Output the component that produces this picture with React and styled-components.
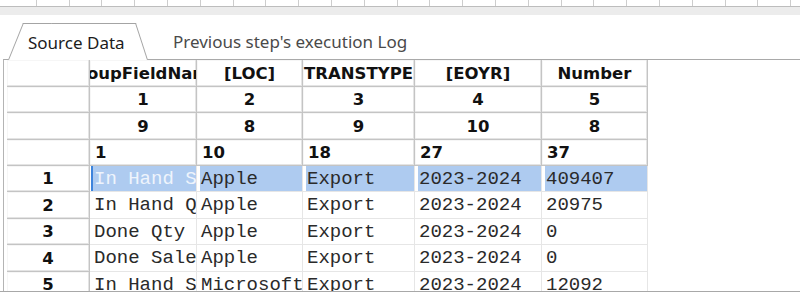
import React from "react";
import styled, { createGlobalStyle } from "styled-components";

const GlobalStyle = createGlobalStyle`
  html, body {
    margin: 0;
    padding: 0;
    background: #fff;
    overflow: hidden;
  }
  #root {
    width: 800px;
    height: 292px;
  }
`;

const Frame = styled.div`
  width: 800px;
  height: 291px;
  border-bottom: 1px solid #a8a8a8;
  overflow: hidden;
  display: flex;
  flex-direction: column;
  background: #fff;
`;

// bit of the grid that sits above, scrolled almost out of view
const StripRow = styled.div`
  display: flex;
  flex-shrink: 0;
  height: 6px;
  padding-left: 4px;
  border-bottom: 1px solid #bdbdbd;
`;

const StripCell = styled.div`
  flex: 0 0 32.8px;
  box-sizing: border-box;
  border-right: 1px solid #cdcdcd;
`;

const Band = styled.div`
  flex-shrink: 0;
  height: 8px;
  background: #ececec;
`;

const TabBar = styled.div`
  flex-shrink: 0;
  height: 44px;
  display: flex;
  align-items: flex-end;
  padding-left: 8px;
  font-family: "Noto Sans", "Open Sans", sans-serif;
  font-size: 17px;
`;

const ActiveTab = styled.div`
  position: relative;
  z-index: 1;
  width: 140px;
  height: 37px;
  margin-bottom: -1px;
  box-sizing: border-box;
  padding: 10px 0 0 20px;
  line-height: 20px;
  color: #1c1c1c;

  &::before,
  &::after {
    content: "";
    position: absolute;
    top: 0;
    bottom: 0;
    width: 60%;
    background: #fff;
    border-top: 1px solid #a4a4a4;
    z-index: -1;
  }

  &::before {
    left: 0;
    border-left: 1px solid #a4a4a4;
    transform: skewX(-22deg);
    transform-origin: bottom left;
  }

  &::after {
    right: 0;
    border-right: 1px solid #a4a4a4;
    transform: skewX(18deg);
    transform-origin: bottom right;
  }
`;

const IdleTab = styled.div`
  height: 37px;
  margin-left: 25px;
  box-sizing: border-box;
  padding-top: 10px;
  line-height: 20px;
  color: #4a4a4a;
`;

const Panel = styled.div`
  flex: 1;
  margin-left: 3px;
  padding-left: 3px;
  border-top: 1px solid #a9a9a9;
  border-left: 1px solid #b4b4b4;
`;

const Grid = styled.div`
  display: grid;
  grid-template-columns: 83px 107px 106px 112px 127px 106px;
  grid-template-rows: 27px 26px 27px 26px 26px 27px 26px 27px 26px;
  width: max-content;
`;

const FixedCell = styled.div`
  box-sizing: border-box;
  display: flex;
  align-items: center;
  justify-content: ${(p) => (p.$left ? "flex-start" : "center")};
  padding: 0 5px;
  overflow: hidden;
  white-space: nowrap;
  background: #fff;
  border-right: 1px solid #c4c4c4;
  border-bottom: 1px solid #c4c4c4;
  box-shadow: inset -1px -1px 0 #e4e4e4, inset 1px 1px 0 #f6f6f6;
  font-family: "DejaVu Sans", Verdana, sans-serif;
  font-weight: bold;
  font-size: 16.5px;
  color: #111;
`;

const DataCell = styled.div`
  box-sizing: border-box;
  display: flex;
  align-items: center;
  padding-left: 4px;
  overflow: hidden;
  white-space: nowrap;
  border-right: 1px solid #e6e6e6;
  border-bottom: 1px solid #e6e6e6;
  font-family: "Liberation Mono", "Courier New", monospace;
  font-size: 19px;
  color: ${(p) => (p.$focused ? "#eef4fc" : "#2a2a2a")};
  background: ${(p) => (p.$selected ? "#aecbf0" : "#fff")};
  box-shadow: ${(p) =>
    p.$focused
      ? "inset 1px 0 0 #fff, inset 3px 0 0 #3d84dc"
      : p.$selected
      ? "inset 3px 0 0 #fff"
      : "none"};
`;

const headers = ["GroupFieldName", "[LOC]", "TRANSTYPE", "[EOYR]", "Number"];
const fixedRows = [
  { values: ["1", "2", "3", "4", "5"], left: false },
  { values: ["9", "8", "9", "10", "8"], left: false },
  { values: ["1", "10", "18", "27", "37"], left: true },
];
const rows = [
  ["In Hand Sale", "Apple", "Export", "2023-2024", "409407"],
  ["In Hand Qty", "Apple", "Export", "2023-2024", "20975"],
  ["Done Qty", "Apple", "Export", "2023-2024", "0"],
  ["Done Sale", "Apple", "Export", "2023-2024", "0"],
  ["In Hand Sale Value", "Microsoft", "Export", "2023-2024", "12092"],
];

export default function App() {
  return (
    <>
      <GlobalStyle />
      <Frame>
        <StripRow>
          {Array.from({ length: 24 }, (_, i) => (
            <StripCell key={i} />
          ))}
        </StripRow>
        <Band />
        <TabBar>
          <ActiveTab>Source Data</ActiveTab>
          <IdleTab>Previous step's execution Log</IdleTab>
        </TabBar>
        <Panel>
          <Grid>
            <FixedCell />
            {headers.map((h) => (
              <FixedCell key={h}>{h}</FixedCell>
            ))}
            {fixedRows.map((r, ri) => (
              <React.Fragment key={ri}>
                <FixedCell />
                {r.values.map((v, ci) => (
                  <FixedCell key={ci} $left={r.left}>
                    {v}
                  </FixedCell>
                ))}
              </React.Fragment>
            ))}
            {rows.map((r, ri) => (
              <React.Fragment key={ri}>
                <FixedCell>{ri + 1}</FixedCell>
                {r.map((v, ci) => (
                  <DataCell
                    key={ci}
                    $selected={ri === 0}
                    $focused={ri === 0 && ci === 0}
                  >
                    {v}
                  </DataCell>
                ))}
              </React.Fragment>
            ))}
          </Grid>
        </Panel>
      </Frame>
    </>
  );
}
